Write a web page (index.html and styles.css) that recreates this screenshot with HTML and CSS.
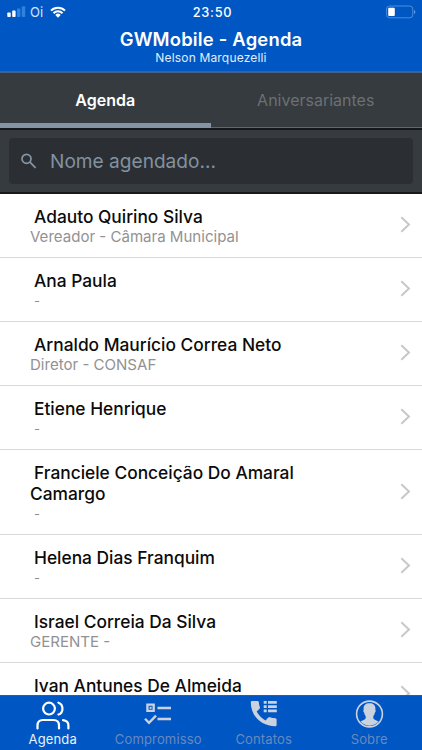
FILE: index.html
```
<!DOCTYPE html>
<html lang="pt-BR">
<head>
<meta charset="utf-8">
<meta name="viewport" content="width=device-width, initial-scale=1">
<title>GWMobile - Agenda</title>
<link rel="stylesheet" href="styles.css">
</head>
<body>
<div class="app">
  <header class="header">
    <div class="status">
      <div class="carrier">
        <svg width="20" height="12" viewBox="0 0 20 12"><g fill="#fff"><rect x="0.3" y="6.5" width="3.4" height="4.5" rx=".8"/><rect x="5.2" y="4.6" width="3.4" height="6.4" rx=".8"/></g><g fill="#2f83dc"><rect x="10" y="2.5" width="3.4" height="8.5" rx=".8"/><rect x="14.8" y="0.3" width="3.4" height="10.7" rx=".8"/></g></svg>
        <span class="oi">Oi</span>
        <svg class="wifi" width="16" height="12" viewBox="0 0 16 12" fill="none" stroke="#fff" stroke-width="2"><path d="M1 4.6A10 10 0 0 1 15 4.6M3.5 7.2A6.3 6.3 0 0 1 12.5 7.2"/><path fill="#fff" stroke="none" d="M5.3 8.9A3.9 3.9 0 0 1 10.7 8.9L8 11.7z"/></svg>
      </div>
      <span class="time">23:50</span>
      <svg class="battery" width="30" height="14" viewBox="0 0 30 14"><rect x=".6" y="1" width="26.2" height="11.8" rx="3" fill="none" stroke="#4c8edb"/><rect x="2.2" y="2.8" width="6.6" height="8.2" rx="1" fill="#fff"/><path d="M28 5q1.4.5 1.4 2T28 9z" fill="#5b9be0"/></svg>
    </div>
    <h1>GWMobile - Agenda</h1>
    <p class="owner">Nelson Marquezelli</p>
  </header>
  <nav class="tabs">
    <div class="tab active"><span>Agenda</span></div>
    <div class="tab"><span>Aniversariantes</span></div>
  </nav>
  <div class="search">
    <div class="field">
      <svg width="16" height="16" viewBox="0 0 16 16" fill="none" stroke="#8496a3" stroke-width="1.7"><circle cx="5.5" cy="5.8" r="4.5"/><path d="M8.9 9.2L14.6 14.9"/></svg>
      <span>Nome agendado...</span>
    </div>
  </div>
  <main class="list">
    <div class="row"><div class="text"><h2>Adauto Quirino Silva</h2><p>Vereador - Câmara Municipal</p></div><svg class="chev" viewBox="0 0 11 17"><path d="M1.3 1.3L9 8.5L1.3 15.7"/></svg></div>
    <div class="row"><div class="text"><h2>Ana Paula</h2><p class="dash">-</p></div><svg class="chev" viewBox="0 0 11 17"><path d="M1.3 1.3L9 8.5L1.3 15.7"/></svg></div>
    <div class="row"><div class="text"><h2>Arnaldo Maurício Correa Neto</h2><p>Diretor - CONSAF</p></div><svg class="chev" viewBox="0 0 11 17"><path d="M1.3 1.3L9 8.5L1.3 15.7"/></svg></div>
    <div class="row"><div class="text"><h2>Etiene Henrique</h2><p class="dash">-</p></div><svg class="chev" viewBox="0 0 11 17"><path d="M1.3 1.3L9 8.5L1.3 15.7"/></svg></div>
    <div class="row tall"><div class="text"><h2>Franciele Conceição Do Amaral<br>Camargo</h2><p class="dash">-</p></div><svg class="chev" viewBox="0 0 11 17"><path d="M1.3 1.3L9 8.5L1.3 15.7"/></svg></div>
    <div class="row"><div class="text"><h2>Helena Dias Franquim</h2><p class="dash">-</p></div><svg class="chev" viewBox="0 0 11 17"><path d="M1.3 1.3L9 8.5L1.3 15.7"/></svg></div>
    <div class="row"><div class="text"><h2>Israel Correia Da Silva</h2><p>GERENTE -</p></div><svg class="chev" viewBox="0 0 11 17"><path d="M1.3 1.3L9 8.5L1.3 15.7"/></svg></div>
    <div class="row"><div class="text"><h2>Ivan Antunes De Almeida</h2></div><svg class="chev" viewBox="0 0 11 17"><path d="M1.3 1.3L9 8.5L1.3 15.7"/></svg></div>
  </main>
  <nav class="bottom">
    <div class="item on">
      <svg width="36" height="30" viewBox="0 0 36 30" fill="none" stroke="#fff" stroke-width="2.2" stroke-linecap="round"><circle cx="14" cy="8.6" r="5.9"/><path d="M23.4 2.7c5.4 1.7 5.4 10.2 0 11.8M2.5 28.5v-3q0-5.5 5.5-5.5h10.5q5.5 0 5.5 5.5v3M28 20.2q5.4.6 5.4 5.3v3"/></svg>
      <span>Agenda</span>
    </div>
    <div class="item">
      <svg width="30" height="30" viewBox="0 0 30 30" fill="none" stroke="#cbd2df" stroke-width="2.3"><path d="M4.4 4.7h6.3v6.2H4.4zM14.5 8H28M14.5 19H28M2 18.8l4 4 7-7.2"/><path d="M6.6 6.8h2v2h-2z" fill="#cbd2df" stroke="none"/></svg>
      <span>Compromisso</span>
    </div>
    <div class="item">
      <svg width="30" height="30" viewBox="0 0 30 30" fill="#cbd2df"><path d="M3 1h5.6q1 0 1.2 1 .2 3 1.1 5.2.3 1-.4 1.6L7.7 11.6q3 5.8 8.8 8.8l2.8-2.8q.7-.7 1.6-.4 2.5.9 5.7 1 1 .2 1 1.2V25q0 1.2-1.2 1.2C12 26.2 1.8 16 1.8 2.2Q1.8 1 3 1zM14.7 1h3v2.7h-3zM19 1h8.8v2.7H19zM14.7 5.3h3V8h-3zM19 5.3h8.8V8H19zM14.7 9.6h3v2.7h-3zM19 9.6h8.8v2.7H19z"/></svg>
      <span>Contatos</span>
    </div>
    <div class="item">
      <svg width="30" height="30" viewBox="0 0 30 30"><circle cx="15.5" cy="14" r="12.9" fill="none" stroke="#cbd2df" stroke-width="1.6"/><path fill="#cbd2df" d="M15.500 3.200c4.600 0 6.400 2.600 5.800 6.500.8.700.3 2.500-.5 3-.3 1.800-.8 2.500-1.500 3.200v2.300c.5 1.800 3.300 2.100 5.200 3.200A11.600 11.600 0 0 1 6.500 21.400c1.900-1.100 4.700-1.400 5.200-3.200v-2.300c-.7-.7-1.200-1.400-1.500-3.200-.8-.5-1.300-2.300-.5-3C9.100 5.800 10.900 3.200 15.500 3.200z"/></svg>
      <span>Sobre</span>
    </div>
  </nav>
</div>
</body>
</html>
```
FILE: styles.css
```
* { box-sizing: border-box; margin: 0; padding: 0; }
body { font-family: Inter, "Liberation Sans", sans-serif; background: #fff; }
svg { display: block; flex: none; }
.app { width: 422px; height: 750px; display: flex; flex-direction: column; overflow: hidden; }
.header { height: 73px; flex: none; background: #0057c4; border-bottom: 2px solid #43618c; color: #fff; text-align: center; }
.status { height: 24px; display: grid; grid-template-columns: 1fr auto 1fr; align-items: center; padding: 0 6px 0 7px; }
.carrier { display: flex; align-items: center; }
.oi { font-size: 13px; margin-left: 3px; color: #d5e6fa; }
.wifi { margin-left: 7px; }
.time { font-size: 12.8px; font-weight: 500; letter-spacing: .7px; padding-left: 2px; }
.battery { justify-self: end; }
h1 { font-size: 18.4px; line-height: 22px; margin-top: 4px; font-weight: 600; letter-spacing: .2px; }
.owner { font-size: 12px; line-height: 16px; letter-spacing: .17px; color: #e1edfb; }
.tabs { height: 57px; flex: none; display: flex; background: #363b3f; border-bottom: 2px solid #15181a; }
.tab { flex: 1; display: flex; justify-content: center; align-items: center; height: 55px; font-size: 16px; color: #6b7073; border-bottom: 1px solid #62676c; padding-right: 1px; }
.tab.active { color: #fff; font-weight: 600; border-bottom: 5px solid #8494a3; padding: 4px 0 0; }
.search { height: 64px; flex: none; background: #363b3f; border-bottom: 2px solid #17191a; padding: 8px 9px; }
.field { height: 46px; border-radius: 4px; background: #2b2f33; display: flex; align-items: center; padding-left: 12px; gap: 13px; font-size: 19.1px; color: #8292a0; }
.list { flex: 1; min-height: 0; overflow: hidden; }
.row { height: 64px; border-bottom: 1px solid #d9d9dc; display: flex; justify-content: space-between; padding: 12px 11px 0 30px; }
.row.tall { height: 85px; }
.text { flex: none; }
h2 { font-size: 17.35px; line-height: 21px; font-weight: 500; color: #0b0b0b; text-indent: 4px; white-space: nowrap; }
.text p { font-size: 15.05px; line-height: 20px; color: #929292; white-space: nowrap; }
.text .dash { font-size: 13px; text-indent: 4px; line-height: 21px; }
.chev { width: 11px; height: 17px; margin-top: 10px; fill: none; stroke: #c8c8cc; stroke-width: 2; }
.tall .chev { margin-top: 21px; }
.bottom { height: 55px; flex: none; display: grid; grid-template-columns: repeat(4, 1fr); background: #0057c4; border-top: 1px solid #2b5c9c; }
.item { display: flex; flex-direction: column; align-items: center; padding-top: 4px; font-size: 13px; line-height: 17px; color: #6889bd; letter-spacing: .15px; }
.item span { margin-top: 1px; }
.item.on { color: #e8f2ff; }
```
